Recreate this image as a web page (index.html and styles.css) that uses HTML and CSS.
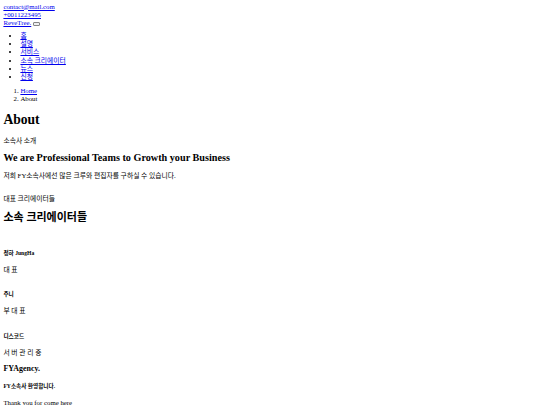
FILE: index.html
```html
<!DOCTYPE html>
<html lang="ko">
<head>
<meta charset="utf-8">
<title>About</title>
<link rel="stylesheet" href="styles.css">
</head>
<body class="page">
<header class="top">
  <div class="contact">
    <a class="link" href="#">contact@mail.com</a><br>
    <a class="link" href="#">+0011223495</a>
  </div>
  <div class="brand">
    <a class="link" href="#">ReveTree.</a> <button class="toggle" type="button"></button>
  </div>
  <ul class="nav">
    <li><a class="link" href="#">홈</a></li>
    <li><a class="link" href="#">설명</a></li>
    <li><a class="link" href="#">서비스</a></li>
    <li><a class="link" href="#">소속 크리에이터</a></li>
    <li><a class="link" href="#">뉴스</a></li>
    <li><a class="link" href="#">신청</a></li>
  </ul>
</header>
<main class="content">
  <ol class="crumbs">
    <li><a class="link" href="#">Home</a></li>
    <li>About</li>
  </ol>
  <h1 class="title">About</h1>
  <p class="text intro">소속사 소개</p>
  <h2 class="subtitle">We are Professional Teams to Growth your Business</h2>
  <p class="text desc">저희 FY소속사에선 많은 크루와 편집자를 구하실 수 있습니다.</p>
  <p class="text lead">대표 크리에이터들</p>
  <h2 class="subtitle team">소속 크리에이터들</h2>
  <div class="cards">
    <div class="card">
      <h5 class="name">정하 JungHa</h5>
      <p class="text role">대 표</p>
    </div>
    <div class="card">
      <h5 class="name">주니</h5>
      <p class="text role">부 대 표</p>
    </div>
    <div class="card">
      <h5 class="name">디스코드</h5>
      <p class="text role">서 버 관 리 중</p>
    </div>
  </div>
</main>
<footer class="foot">
  <h3 class="foot-title">FYAgency.</h3>
  <h5 class="name foot-name">FY소속사 환영합니다.</h5>
  <p class="text foot-text">Thank you for come here</p>
</footer>
</body>
</html>
```

FILE: styles.css
```css
html {
  background: #ffffff;
}
.page {
  margin: 2.7px 3.4px 3.4px;
  font-family: "Liberation Serif", "Noto Sans CJK KR", serif;
  font-size: 6.8px;
  line-height: 8px;
  color: #000000;
}
.link {
  color: #0000ee;
  text-decoration: underline;
}
.toggle {
  display: inline-block;
  width: 7px;
  height: 4px;
  padding: 0;
  margin: 0;
  border: 0.5px solid #858585;
  border-radius: 1px;
  background: #efefef;
  vertical-align: baseline;
}
.nav {
  margin: 5.3px 0 0;
  padding-left: 17px;
  line-height: 8.25px;
}
.crumbs {
  margin: 5.5px 0 0;
  padding-left: 17px;
}
.text {
  margin: 0;
}
.title {
  font-size: 13.6px;
  line-height: 15.6px;
  margin: 9.2px 0 0;
}
.intro {
  margin-top: 9.2px;
}
.subtitle {
  font-size: 10.2px;
  line-height: 11.7px;
  margin: 7.45px 0 0;
}
.desc {
  margin-top: 7.55px;
}
.lead {
  margin-top: 15.6px;
}
.team {
  font-size: 11px;
  margin-top: 9.15px;
}
.cards {
  display: flex;
  flex-direction: column;
  gap: 17.25px;
  margin-top: 25.9px;
}
.name {
  font-size: 5.64px;
  line-height: 6.5px;
  margin: 0 0 9.6px;
}
.foot-title {
  font-size: 7.96px;
  line-height: 9.15px;
  margin: 6.85px 0 0;
}
.foot-name {
  margin: 10.2px 0 0;
}
.foot-text {
  margin-top: 9.45px;
}
```
